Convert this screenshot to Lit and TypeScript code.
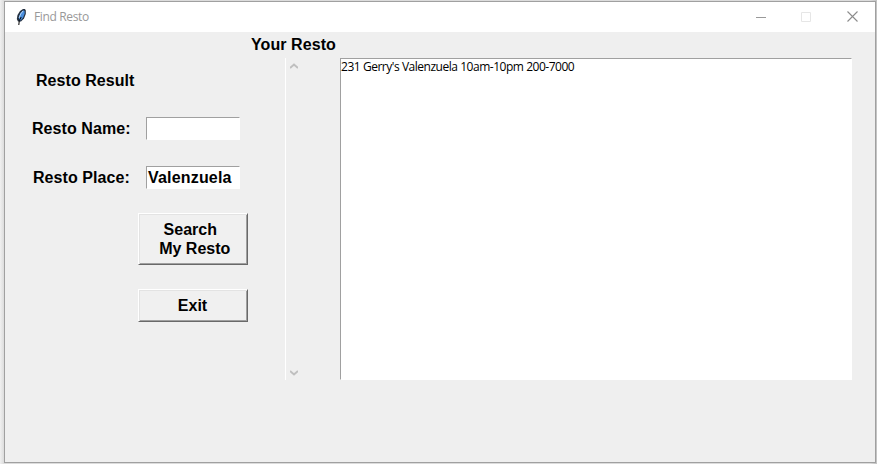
import { LitElement, html, css } from "lit";
import { customElement } from "lit/decorators.js";

@customElement("app-root")
export class AppRoot extends LitElement {
  static styles = css`
    :host {
      display: block;
      box-sizing: border-box;
      height: 464px;
      padding: 1px 1px 1px 4px;
      background: linear-gradient(to right, #f0f0f0, #dcdcdc 4px, #dcdcdc 870px, #c4c4c4 876px);
      font: bold 16px/19px "Liberation Sans", Arial, sans-serif;
      color: #000;
    }
    .window {
      box-sizing: border-box;
      height: 462px;
      border: 1px solid #a0a0a0;
      background: #efefef;
    }
    .title {
      display: flex;
      align-items: center;
      height: 30px;
      background: #fff;
    }
    .feather { margin-left: 11px; width: 10px; height: 16px; margin-top: -1px; }
    .name {
      flex: 1;
      margin-left: 8px;
      font: 12px/16px "Open Sans", "Noto Sans", sans-serif;
      letter-spacing: -0.35px;
      color: #999;
    }
    .controls { display: flex; gap: 35px; margin-right: 17px; margin-top: -2px; }
    .controls svg { display: block; width: 11px; height: 11px; }
    .body {
      display: grid;
      grid-template-columns: 280px 17px 38px 512px;
      grid-template-rows: 26px 322px;
    }
    .heading { grid-column: 1 / -1; padding: 3px 0 0 246px; letter-spacing: 0.08px; }
    .form { padding-top: 13px; }
    .result { margin-left: 31px; letter-spacing: 0.05px; }
    .row { display: flex; height: 23px; align-items: center; }
    .row.first { margin-top: 27px; }
    .row.second { margin-top: 26px; }
    .label { box-sizing: border-box; width: 141px; padding-left: 27px; letter-spacing: 0.07px; }
    .second .label { padding-left: 28px; }
    .entry {
      box-sizing: border-box;
      width: 94px;
      height: 23px;
      padding: 1px 0 0 1px;
      border: 1px solid #fff;
      border-top-color: #a0a0a0;
      border-left-color: #a0a0a0;
      background: #fff;
      letter-spacing: 0.18px;
    }
    .button {
      display: flex;
      box-sizing: border-box;
      align-items: center;
      justify-content: center;
      width: 110px;
      margin-left: 133px;
      padding: 0 1px 0 0;
      font: inherit;
      color: inherit;
      text-align: center;
      white-space: pre;
      background: #f0f0f0;
      border: 1px solid;
      border-color: #fff #696969 #696969 #fff;
      box-shadow: inset 1px 1px #e3e3e3, inset -1px -1px #a0a0a0;
    }
    .search { height: 52px; margin-top: 24px; }
    .exit { height: 33px; margin-top: 24px; }
    .scroll {
      display: flex;
      flex-direction: column;
      justify-content: space-between;
      align-items: flex-start;
      box-sizing: border-box;
      border-left: 1px solid #fff;
      padding: 5px 0 4px 4px;
    }
    .scroll svg { display: block; width: 8px; height: 6px; }
    .list {
      grid-column: 4;
      box-sizing: border-box;
      border: 1px solid #fff;
      border-top-color: #a0a0a0;
      border-left-color: #a0a0a0;
      background: #fff;
      font: 12px/16px "Open Sans", "Noto Sans", sans-serif;
      letter-spacing: -0.48px;
      word-spacing: 0.1px;
    }
  `;

  render() {
    return html`
      <div class="window">
        <div class="title">
          <svg class="feather" viewBox="0 0 10 16">
            <path d="M7 0h2l.8 1.5V5L8 9.5 5 12.5H2L.8 10l.7-4L4 2z" fill="#253141" />
            <path d="M7.2 1.2 8.6 2v2.8L7 8.8 4.8 11.2H3V8l1.3-4z" fill="#4a8fdf" />
            <path d="M7 2 4.7 5 3 9" stroke="#b5d5f5" fill="none" />
            <path d="M5.2 8 3.3 11.5 2.8 16" stroke="#000" fill="none" />
          </svg>
          <span class="name">Find Resto</span>
          <div class="controls">
            <svg viewBox="0 0 11 11" shape-rendering="crispEdges"><path d="M.5 6.5h10" stroke="#999" /></svg>
            <svg viewBox="0 0 11 11"><path d="M.5 1.5h9v9h-9z" stroke="#e6e6e6" fill="none" /></svg>
            <svg viewBox="0 0 11 11"><path d="m.5 .5 10 10m0-10-10 10" stroke="#8c8c8c" stroke-width="1.1" /></svg>
          </div>
        </div>
        <div class="body">
          <div class="heading">Your Resto</div>
          <div class="form">
            <div class="result">Resto Result</div>
            <div class="row first"><span class="label">Resto Name:</span><div class="entry"></div></div>
            <div class="row second"><span class="label">Resto Place:</span><div class="entry">Valenzuela</div></div>
            <button class="button search">${"Search \n My Resto"}</button>
            <button class="button exit">Exit</button>
          </div>
          <div class="scroll">
            <svg viewBox="0 0 8 6"><path d="M0 5 4 1.5 8 5" stroke="#bfbfbf" stroke-width="2" fill="none" /></svg>
            <svg viewBox="0 0 8 6"><path d="M0 1 4 4.5 8 1" stroke="#bfbfbf" stroke-width="2" fill="none" /></svg>
          </div>
          <div class="list">231 Gerry's Valenzuela 10am-10pm 200-7000</div>
        </div>
      </div>
    `;
  }
}
